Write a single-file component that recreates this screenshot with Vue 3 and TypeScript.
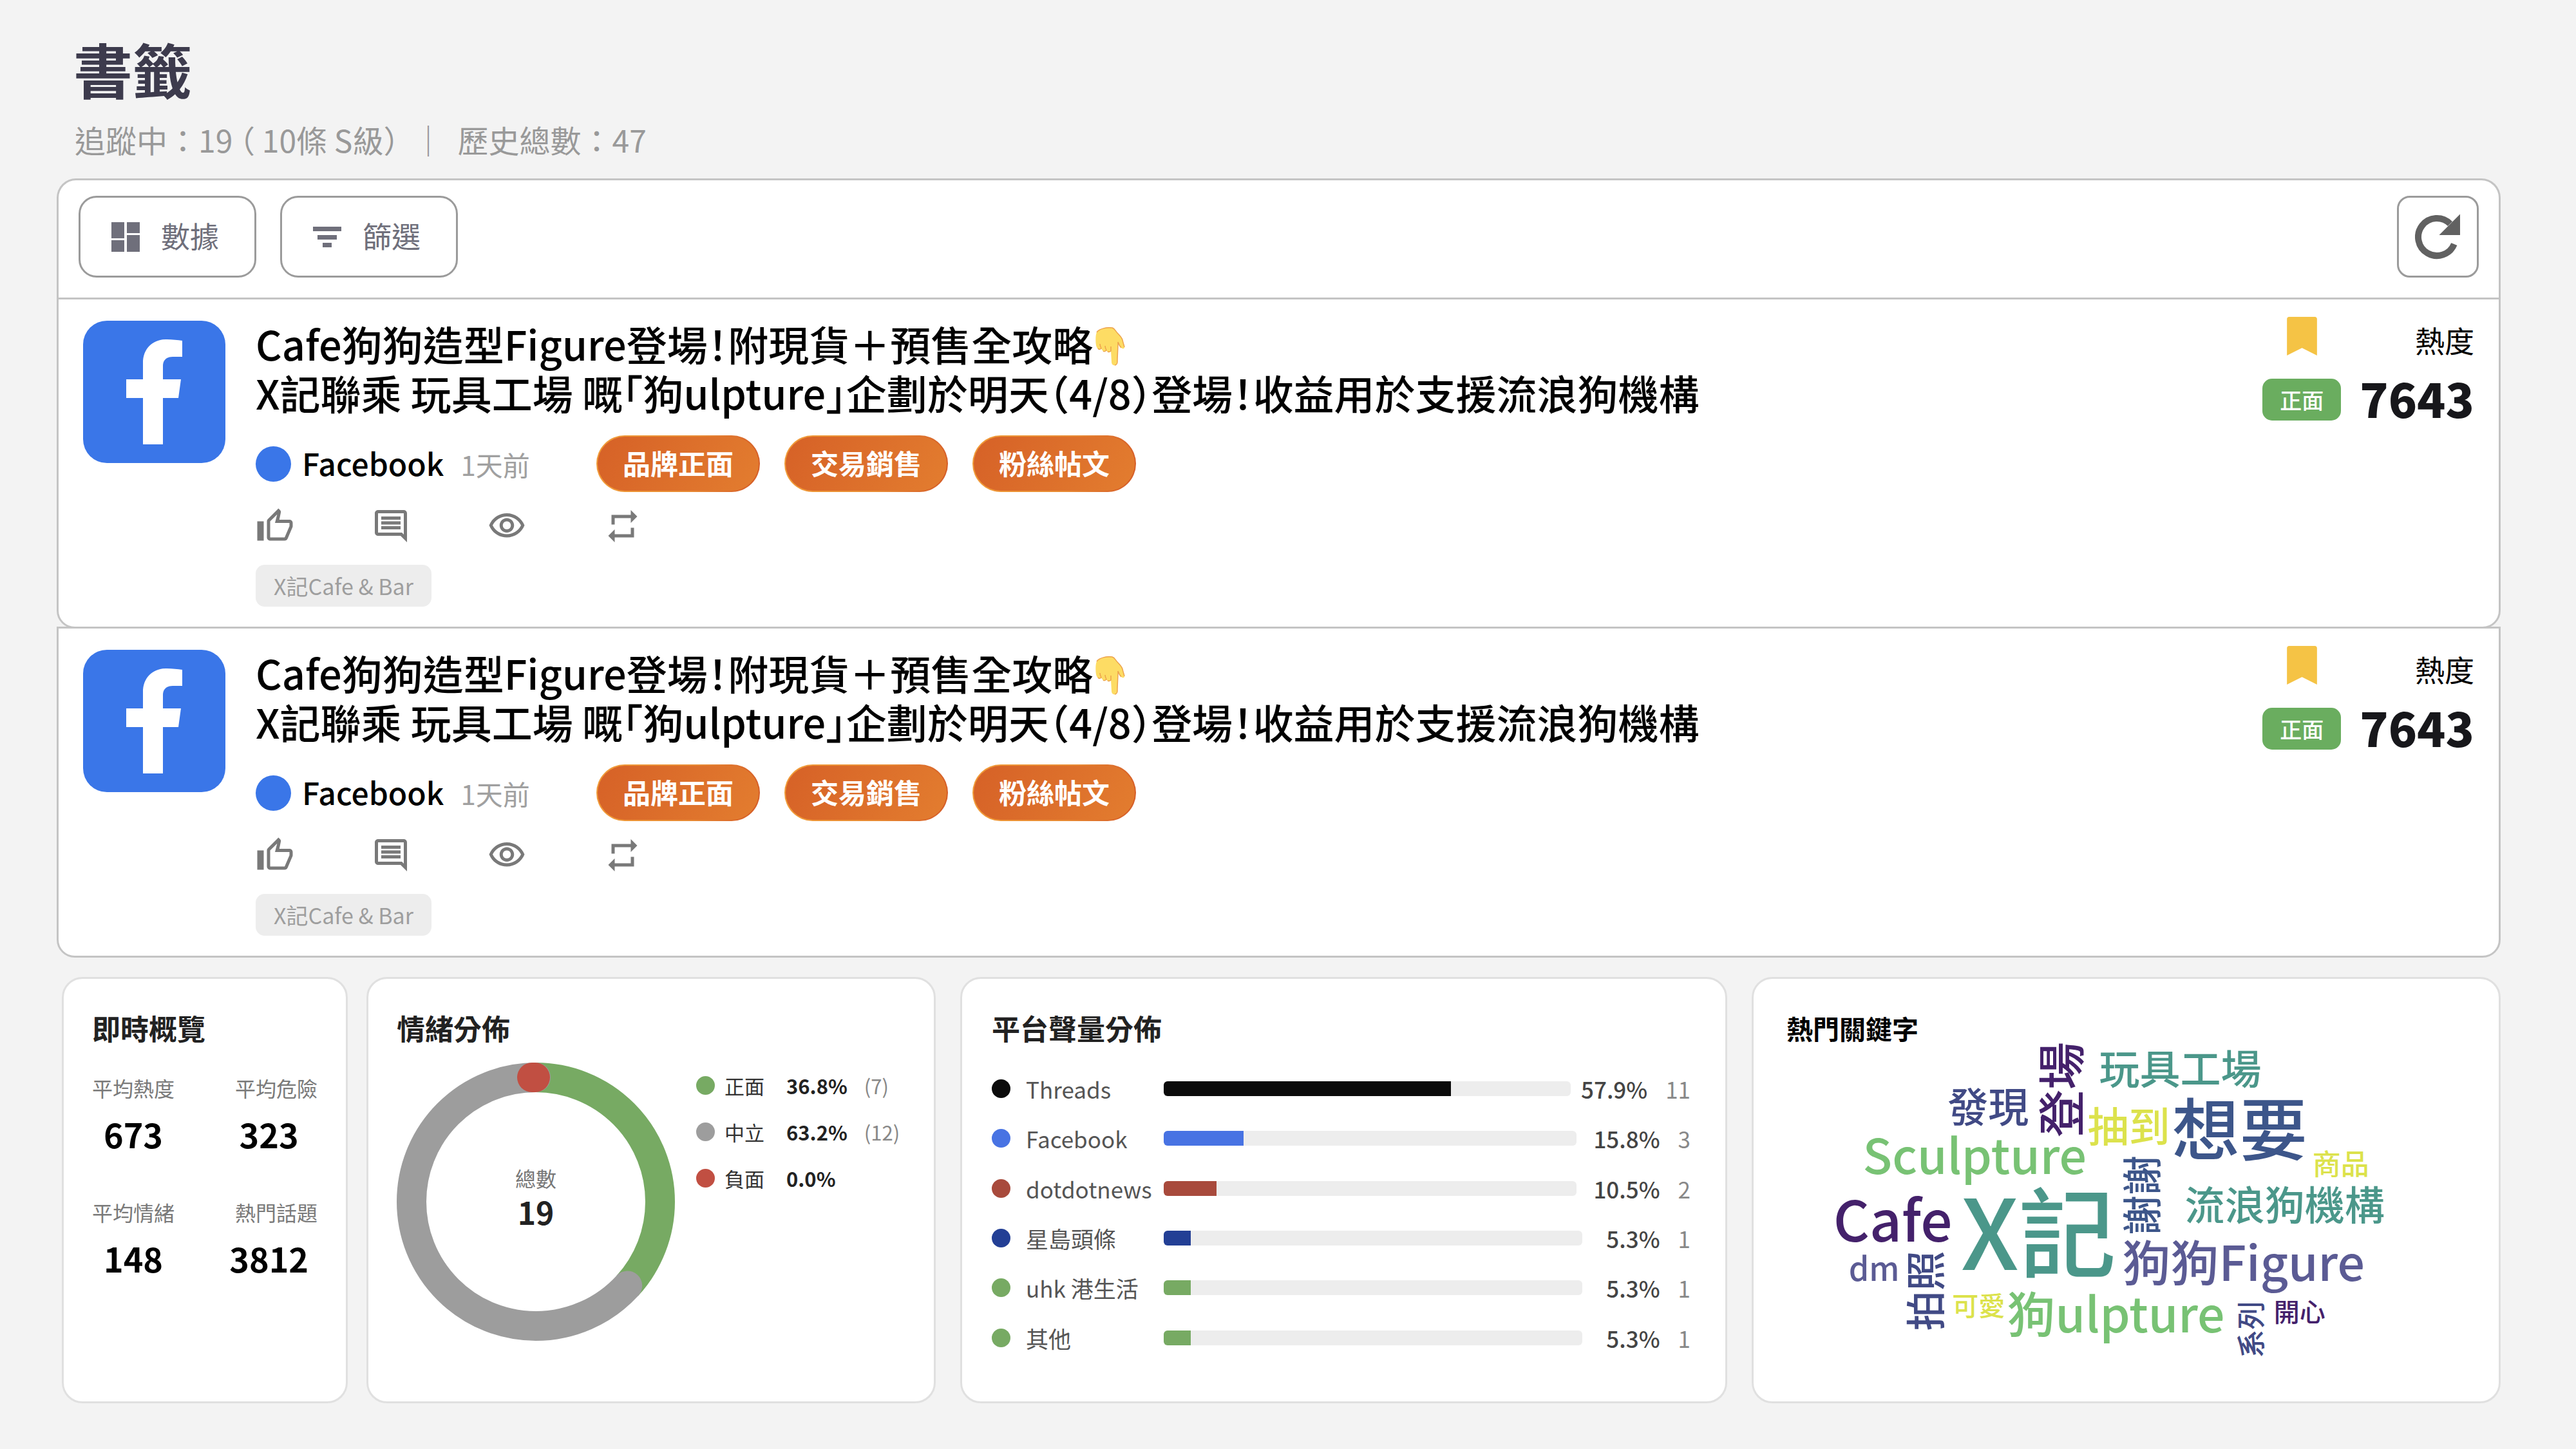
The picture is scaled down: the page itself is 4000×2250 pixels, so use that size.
<script setup lang="ts">
interface Platform { name: string; color: string; percent: string; count: string }
interface Slice { name: string; color: string; percent: string; count: string }
interface Word { text: string; x: number; y: number; size: number; color: string; upright?: boolean }

const posts = [1, 2]
const topics = ['品牌正面', '交易銷售', '粉絲帖文']

const stats = [
  { label: '平均熱度', value: '673' },
  { label: '平均危險', value: '323' },
  { label: '平均情緒', value: '148' },
  { label: '熱門話題', value: '3812' },
]

const slices: Slice[] = [
  { name: '正面', color: '#77aa63', percent: '36.8%', count: '(7)' },
  { name: '中立', color: '#9d9d9d', percent: '63.2%', count: '(12)' },
  { name: '負面', color: '#c14f42', percent: '0.0%', count: '' },
]

const platforms: Platform[] = [
  { name: 'Threads', color: '#0b0b0b', percent: '57.9%', count: '11' },
  { name: 'Facebook', color: '#4873e3', percent: '15.8%', count: '3' },
  { name: 'dotdotnews', color: '#a84a3c', percent: '10.5%', count: '2' },
  { name: '星島頭條', color: '#233f95', percent: '5.3%', count: '1' },
  { name: 'uhk 港生活', color: '#77aa63', percent: '5.3%', count: '1' },
  { name: '其他', color: '#77aa63', percent: '5.3%', count: '1' },
]

// The longest bar fills about 70% of its track; the others keep the same scale.
const barWidth = (p: Platform) => `${Math.round(parseFloat(p.percent) * 12.2) / 10}%`
const valueWidth = (p: Platform) => `${168 + 9 * (p.percent.length - 4) + 9 * (p.count.length - 1)}px`

// x, y: middle of the word's baseline, or the centre of a turned word.
const words: Word[] = [
  { text: '登場', x: 427, y: 68, size: 74, color: '#44216b', upright: true },
  { text: '玩具工場', x: 611, y: 59, size: 63, color: '#4b978a' },
  { text: '發現', x: 313, y: 118, size: 63, color: '#414a85' },
  { text: '抽到', x: 531, y: 149, size: 64, color: '#dce24c' },
  { text: '想要', x: 703, y: 169, size: 105, color: '#3d568a' },
  { text: 'Sculpture', x: 292, y: 199, size: 75, color: '#78c274' },
  { text: '商品', x: 860, y: 200, size: 44, color: '#dce24c' },
  { text: '謝謝', x: 551, y: 232, size: 62, color: '#3d568a', upright: true },
  { text: '流浪狗機構', x: 773, y: 271, size: 62, color: '#4b978a' },
  { text: 'Cafe', x: 165, y: 304, size: 87, color: '#44216b' },
  { text: 'X記', x: 391, y: 348, size: 151, color: '#4b978a' },
  { text: '狗狗Figure', x: 709, y: 365, size: 75, color: '#5b5b94' },
  { text: 'dm', x: 136, y: 365, size: 50, color: '#5b5b94' },
  { text: '拍照', x: 216, y: 380, size: 62, color: '#414a85', upright: true },
  { text: '可愛', x: 298, y: 419, size: 41, color: '#dce24c' },
  { text: '狗ulpture', x: 511, y: 445, size: 75, color: '#78c274' },
  { text: '系列', x: 720, y: 440, size: 44, color: '#414a85', upright: true },
  { text: '開心', x: 796, y: 428, size: 40, color: '#44216b' },
]

const wordTransform = (w: Word) => `translate(${w.x} ${w.y})${w.upright ? ' rotate(-90)' : ''}`

// Donut geometry
const R = 193
const C = 2 * Math.PI * R
const green = 0.368 * C
const grey = 0.632 * C
</script>

<template>
  <main class="page" lang="zh-Hant">
    <header class="header">
      <h1>書籤</h1>
      <p>追蹤中：19 <span class="half">（</span> 10條 S級<span class="half">）</span>&nbsp; ｜&nbsp; 歷史總數：47</p>
    </header>

    <section class="panel">
      <div class="toolbar">
        <button type="button" class="tool">
          <svg class="tool-icon" viewBox="0 0 44 46" aria-hidden="true">
            <path d="M0 0h20v25H0zM0 28h20v18H0zM24 0h20v17H24zM24 20h20v26H24z" />
          </svg>
          <span>數據</span>
        </button>
        <button type="button" class="tool">
          <svg class="tool-icon" viewBox="0 0 44 46" aria-hidden="true">
            <path d="M0 7h44v7H0zM7 20h30v7H7zM15 32h14v7H15z" />
          </svg>
          <span>篩選</span>
        </button>
        <button type="button" class="refresh" aria-label="重新整理">
          <svg viewBox="0 0 72 72" aria-hidden="true">
            <path d="M54.5 15.5A29 29 0 1 0 60.8 47.1" fill="none" stroke="#616161" stroke-width="10" />
            <path d="M70 0.500V33H37.500z" fill="#616161" />
          </svg>
        </button>
      </div>

      <article v-for="p in posts" :key="p" class="post">
        <svg class="logo" viewBox="0 0 221 221" role="img" aria-label="Facebook">
          <rect width="221" height="221" rx="37" fill="#3a76e8" />
          <path fill="#fff" d="M93 192V120H67V91H93V66C93 43 108 29 130 29C139 29 147 30 154 31V56H139C130 56 124 61 124 70V91H152L148 120H124V192z" />
        </svg>
        <div class="body">
          <h2>
            Cafe狗狗造型Figure登場<span class="half">！</span>附現貨＋預售全攻略<svg class="hand" viewBox="0 0 46 60" role="img" aria-label="👇"><path d="M2 8C6 2 18 0 26 1C30 2 31 6 34 9C39 14 41 16 42 20C43 25 44 27 45 31C45 34 42 34 40 32C37 29 36 26 35 23C35 34 34 44 34 54C34 61 25 61 25 54L24 37C22 40 18 39 17 36C14 39 10 37 9 33C5 36 2 33 1 28C0 22 0 12 2 8z" fill="#fddc64" /><path d="M2 8C6 2 18 0 26 1C30 2 31 6 34 9C39 14 41 16 42 20C43 25 44 27 45 31M35 23C36 26 37 29 40 32M35 23C35 34 34 44 34 54C34 57 32 59 30 59M7 26C7 29 8 31 9 33C7 35 5 35 4 33M15 29C15 32 16 34 17 36C15 38 13 38 12 37M24 30V37C22 39 21 39 19 38" fill="none" stroke="#eda34c" stroke-width="1.500" /></svg><br>
            X記聯乘 玩具工場 嘅<span class="half">「</span>狗ulpture<span class="half">」</span>企劃於明天<span class="half">（</span>4/8<span class="half">）</span>登場<span class="half">！</span>收益用於支援流浪狗機構
          </h2>
          <div class="meta">
            <div class="source">
              <i class="dot"></i><strong>Facebook</strong><time>1天前</time>
            </div>
            <span v-for="t in topics" :key="t" class="pill">{{ t }}</span>
          </div>
          <div class="actions">
            <button type="button" aria-label="讚好"><svg viewBox="0 0 24 24"><path d="M9 21h9c.83 0 1.540-.5 1.840-1.220l3.020-7.050c.09-.23.14-.47.14-.73v-2c0-1.100-.9-2-2-2h-6.310l.95-4.570.03-.32c0-.41-.17-.79-.44-1.060L14.170 1 7.580 7.590C7.220 7.950 7 8.450 7 9v10c0 1.100.9 2 2 2zM9 9l4.340-4.340L12 10h9v2l-3 7H9V9zM1 9h4v12H1z" /></svg></button>
            <button type="button" aria-label="留言"><svg viewBox="0 0 24 24"><path d="M21.990 4c0-1.100-.89-2-1.990-2H4c-1.100 0-2 .9-2 2v12c0 1.100.9 2 2 2h14l4 4-.01-18zM20 4v13.170L18.830 16H4V4h16zM6 12h12v2H6zm0-3h12v2H6zm0-3h12v2H6z" /></svg></button>
            <button type="button" aria-label="瀏覽"><svg viewBox="0 0 24 24"><path d="M12 6c3.790 0 7.170 2.130 8.820 5.500C19.170 14.870 15.790 17 12 17s-7.170-2.130-8.820-5.500C4.830 8.130 8.210 6 12 6m0-2C7 4 2.730 7.110 1 11.500 2.730 15.890 7 19 12 19s9.270-3.110 11-7.500C21.270 7.110 17 4 12 4zm0 5c1.380 0 2.500 1.120 2.500 2.500S13.380 14 12 14s-2.500-1.120-2.500-2.500S10.620 9 12 9m0-2c-2.480 0-4.500 2.020-4.500 4.500S9.520 16 12 16s4.500-2.020 4.500-4.500S14.480 7 12 7z" /></svg></button>
            <button type="button" aria-label="轉發"><svg viewBox="0 0 24 24"><path d="M7 7h10v3l4-4-4-4v3H5v6h2V7zm10 10H7v-3l-4 4 4 4v-3h12v-6h-2v4z" /></svg></button>
          </div>
          <span class="tag">X記Cafe &amp; Bar</span>
        </div>
        <div class="mark">
          <svg viewBox="5 3 14 18" role="img" aria-label="已加入書籤"><path fill="#f5c345" d="M18 3H6C5.400 3 5 3.400 5 4v17l7-3.500 7 3.500V4c0-.6-.4-1-1-1z" /></svg>
          <span class="mood">正面</span>
        </div>
        <div class="heat">
          <span>熱度</span>
          <b>7643</b>
        </div>
      </article>
    </section>

    <section class="cards">
      <div class="card">
        <h3>即時概覽</h3>
        <dl class="stats">
          <div v-for="s in stats" :key="s.label">
            <dt>{{ s.label }}</dt>
            <dd>{{ s.value }}</dd>
          </div>
        </dl>
      </div>

      <div class="card">
        <h3>情緒分佈</h3>
        <div class="mood-row">
          <div class="donut">
            <svg viewBox="0 0 432 432" aria-hidden="true">
              <g fill="none" stroke-width="46" transform="rotate(-90 216 216)">
                <circle cx="216" cy="216" :r="R" stroke="#77aa63" :stroke-dasharray="`${green} ${C}`" />
                <circle cx="216" cy="216" :r="R" stroke="#9d9d9d" stroke-linecap="round" :stroke-dasharray="`${grey} ${C}`" :stroke-dashoffset="-green" />
              </g>
              <path d="M210 23H215" stroke="#c14f42" stroke-width="46" stroke-linecap="round" />
            </svg>
            <div class="total"><span>總數</span><b>19</b></div>
          </div>
          <ul class="legend">
            <li v-for="s in slices" :key="s.name">
              <i :style="{ background: s.color }"></i>
              <span class="name">{{ s.name }}</span>
              <b>{{ s.percent }}</b>
              <span class="count">{{ s.count }}</span>
            </li>
          </ul>
        </div>
      </div>

      <div class="card volume">
        <h3>平台聲量分佈</h3>
        <ul class="bars">
          <li v-for="p in platforms" :key="p.name">
            <i :style="{ background: p.color }"></i>
            <span class="name">{{ p.name }}</span>
            <span class="track"><span class="fill" :style="{ width: barWidth(p), background: p.color }"></span></span>
            <span class="value" :style="{ width: valueWidth(p) }"><b>{{ p.percent }}</b><span>{{ p.count }}</span></span>
          </li>
        </ul>
      </div>

      <div class="card keywords">
        <h3>熱門關鍵字</h3>
        <svg class="cloud" viewBox="0 0 1056 490">
          <text
            v-for="w in words"
            :key="w.text"
            :transform="wordTransform(w)"
            :y="w.upright ? Math.round(w.size * 0.38) : 0"
            :font-size="w.size"
            :fill="w.color"
            text-anchor="middle"
          >{{ w.text }}</text>
        </svg>
      </div>
    </section>
  </main>
</template>

<style>
html,
body {
  background: #f3f3f3;
}
</style>

<style scoped>
.page {
  padding: 56px 117px 70px 88px;
  font-family: "Noto Sans CJK TC", "Noto Sans", sans-serif;
  color: #000;
}
.page *,
.page {
  box-sizing: border-box;
}
h1, h2, h3, p, ul, dl, dd {
  margin: 0;
  padding: 0;
}
ul {
  list-style: none;
}
button {
  font: inherit;
  padding: 0;
  background: none;
  border: 0;
  cursor: pointer;
}
svg {
  display: block;
}
.half {
  font-feature-settings: "halt";
}

/* Header */
.header {
  padding-left: 26px;
}
.header h1 {
  font-size: 92px;
  line-height: 100px;
  font-weight: 700;
  color: #3d3b4d;
}
.header p {
  margin-top: 28px;
  padding-left: 2px;
  font-size: 48px;
  line-height: 64px;
  color: #999;
}

/* Panel */
.panel {
  margin-top: 29px;
}
.toolbar {
  display: flex;
  gap: 37px;
  padding: 24px 31px 31px;
  background: #fff;
  border: 3px solid #c4c4c4;
  border-bottom: 0;
  border-radius: 30px 30px 0 0;
}
.tool {
  display: flex;
  align-items: center;
  gap: 33px;
  width: 276px;
  height: 127px;
  padding-left: 48px;
  border: 3px solid #9b9b9b;
  border-radius: 28px;
  font-size: 45px;
  line-height: 60px;
  color: #6f6f7b;
}
.tool span {
  padding-bottom: 4px;
}
.tool-icon {
  width: 44px;
  height: 46px;
  fill: currentColor;
}
.refresh {
  display: flex;
  align-items: center;
  justify-content: center;
  width: 127px;
  height: 127px;
  margin-left: auto;
  border: 3px solid #9b9b9b;
  border-radius: 20px;
}
.refresh svg {
  width: 72px;
  height: 72px;
}

/* Post */
.post {
  display: flex;
  align-items: flex-start;
  padding: 27px 38px 31px;
  background: #fff;
  border: 3px solid #c4c4c4;
  border-radius: 0 0 28px 28px;
}
.post + .post {
  margin-top: -3px;
}
.logo {
  width: 221px;
  height: 221px;
  margin-top: 6px;
}
.body {
  flex: 1;
  padding: 3px 0 0 47px;
}
h2 {
  font-size: 63px;
  line-height: 76px;
  font-weight: 500;
  white-space: nowrap;
}
.hand {
  display: inline-block;
  width: 46px;
  height: 60px;
  margin-left: 4px;
  vertical-align: -8px;
}
.meta {
  display: flex;
  gap: 38px;
  margin-top: 29px;
}
.source {
  display: flex;
  align-items: center;
  width: 491px;
}
.dot {
  width: 55px;
  height: 55px;
  border-radius: 50%;
  background: #3a76e8;
}
.source strong {
  margin-left: 17px;
  padding-bottom: 4px;
  font-size: 48px;
  font-weight: 500;
}
.source time {
  margin-left: 26px;
  font-size: 42px;
  color: #a0a0a0;
}
.pill {
  width: 254px;
  height: 88px;
  border: 2px solid transparent;
  border-radius: 44px;
  background:
    linear-gradient(120deg, #d66127, #e37d2f) padding-box,
    linear-gradient(100deg, #f09a38 10%, #e88a33 60%, #d65f28 95%) border-box;
  color: #fff;
  font-size: 43px;
  line-height: 80px;
  font-weight: 700;
  text-align: center;
}
.actions {
  display: flex;
  gap: 120px;
  margin-top: 23px;
}
.actions svg {
  width: 60px;
  height: 60px;
  fill: #797979;
}
.tag {
  display: inline-block;
  margin-top: 30px;
  padding: 0 28px;
  border-radius: 14px;
  background: #ededed;
  color: #9e9e9e;
  font-size: 34px;
  line-height: 65px;
  vertical-align: top;
}
.mark {
  display: flex;
  flex-direction: column;
  align-items: center;
  gap: 36px;
}
.mark svg {
  width: 47px;
  height: 60px;
}
.mood {
  width: 122px;
  border-radius: 15px;
  background: #6aad5f;
  color: #fff;
  font-size: 34px;
  line-height: 65px;
  font-weight: 500;
  text-align: center;
}
.heat {
  display: flex;
  flex-direction: column;
  align-items: flex-end;
  gap: 20px;
  margin-left: 29px;
  padding-top: 5px;
}
.heat span {
  font-size: 46px;
  line-height: 60px;
}
.heat b {
  font-size: 73px;
  line-height: 80px;
  font-weight: 900;
  color: #17171b;
}

/* Cards */
.cards {
  display: grid;
  grid-template-columns: 444fr 884fr 1200fr 1172fr;
  gap: 29px;
  margin-top: 30px;
  padding-left: 8px;
}
.card {
  min-width: 0;
  min-height: 662px;
  padding: 48px 44px;
  background: #fff;
  border: 3px solid #e0e0e0;
  border-radius: 32px;
}
h3 {
  font-size: 44px;
  line-height: 56px;
  font-weight: 700;
  color: #222;
}
.stats {
  display: grid;
  grid-template-columns: auto auto;
  justify-content: space-between;
  row-gap: 69px;
  margin-top: 45px;
}
dt {
  font-size: 32px;
  line-height: 40px;
  color: #7a7a7a;
}
dd {
  margin-top: 20px;
  font-size: 52px;
  line-height: 64px;
  font-weight: 700;
  text-align: center;
}
.stats div:nth-child(even) dt {
  text-align: right;
}
.stats div:nth-child(even) dd {
  padding-right: 14px;
}

.mood-row {
  display: flex;
  gap: 33px;
  margin-top: 26px;
}
.donut {
  display: grid;
  place-items: center;
  width: 432px;
  height: 432px;
}
.donut > * {
  grid-area: 1 / 1;
}
.donut svg {
  width: 432px;
  height: 432px;
}
.total {
  display: flex;
  flex-direction: column;
  align-items: center;
  padding-bottom: 10px;
}
.total span {
  font-size: 32px;
  line-height: 40px;
  color: #777;
}
.total b {
  font-size: 48px;
  line-height: 64px;
  color: #222;
}
.legend li {
  display: flex;
  align-items: center;
  height: 72px;
  padding-bottom: 2px;
  font-size: 31px;
  color: #333;
}
.legend i,
.bars i {
  width: 29px;
  height: 29px;
  border-radius: 50%;
}
.legend .name {
  margin-left: 15px;
}
.legend b {
  margin-left: 34px;
  color: #222;
}
.legend .count {
  margin-left: 26px;
  color: #888;
}

.volume,
.keywords {
  margin-left: 9px;
}
.volume {
  padding: 48px 54px 48px 46px;
}
.bars {
  display: grid;
  grid-auto-rows: 1fr;
  height: 464px;
  margin-top: 28px;
}
.bars li {
  display: flex;
  align-items: center;
  font-size: 35px;
  color: #555;
}
.bars .name {
  width: 238px;
  padding-left: 24px;
  white-space: nowrap;
}
.track {
  flex: 1;
  height: 23px;
  border-radius: 6px;
  background: #ededed;
  overflow: hidden;
}
.fill {
  display: block;
  height: 100%;
}
.value {
  display: flex;
  justify-content: flex-end;
  gap: 28px;
}
.value b {
  font-weight: 500;
  color: #444;
}
.value span {
  color: #888;
}
.keywords {
  padding: 48px 49px 48px 51px;
}
.keywords h3 {
  font-size: 41px;
  color: #000;
}
.cloud {
  width: 100%;
  height: auto;
  overflow: visible;
  font-weight: 500;
}
</style>
